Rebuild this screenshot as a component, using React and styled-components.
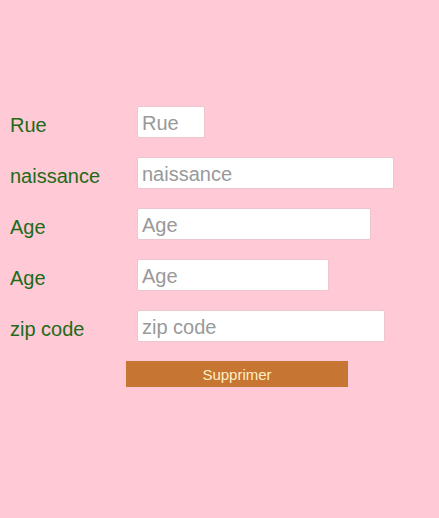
import React from 'react';
import styled, { createGlobalStyle } from 'styled-components';

const GlobalStyle = createGlobalStyle`
  html, body {
    margin: 0;
    padding: 0;
    background: #ffc9d5;
  }
  body {
    font-family: "Liberation Sans", Arial, sans-serif;
  }
`;

const fields = [
  { label: 'Rue', width: 68 },
  { label: 'naissance', width: 257 },
  { label: 'Age', width: 234 },
  { label: 'Age', width: 192 },
  { label: 'zip code', width: 248 },
];

const App = () => {
  return (
    <>
      <GlobalStyle />
      <Page>
        <Form onSubmit={(e) => e.preventDefault()}>
          {fields.map((f, i) => (
            <Row key={i}>
              <Label>{f.label}</Label>
              <Field $width={f.width} placeholder={f.label} />
            </Row>
          ))}
          <DeleteBtn type="button">Supprimer</DeleteBtn>
        </Form>
      </Page>
    </>
  );
};

export default App;

const Page = styled.div`
  width: 439px;
  height: 518px;
  background: #ffc9d5;
  padding-top: 106px;
  box-sizing: border-box;
`;

const Form = styled.form`
  display: flex;
  flex-direction: column;
  gap: 19px;
`;

const Row = styled.div`
  display: flex;
  align-items: center;
  height: 32px;
`;

const Label = styled.label`
  flex: 0 0 137px;
  width: 137px;
  padding-left: 10px;
  padding-top: 6px;
  box-sizing: border-box;
  font-size: 20px;
  color: #1d6a1a;
`;

const Field = styled.input`
  flex: none;
  width: ${(props) => props.$width}px;
  height: 32px;
  margin: 0;
  box-sizing: border-box;
  padding: 2px 4px 0;
  border: 1px solid #ecc6cc;
  border-radius: 2px;
  background: #fff;
  font-family: "Liberation Sans", Arial, sans-serif;
  font-size: 20px;
  color: #333;
  outline: none;

  &::placeholder {
    color: #999;
  }
`;

const DeleteBtn = styled.button`
  margin-left: 126px;
  width: 222px;
  height: 26px;
  border: none;
  background: #c67533;
  color: #fff0c4;
  font-family: "Liberation Sans", Arial, sans-serif;
  font-size: 15px;
  padding: 0;
  cursor: pointer;
`;
